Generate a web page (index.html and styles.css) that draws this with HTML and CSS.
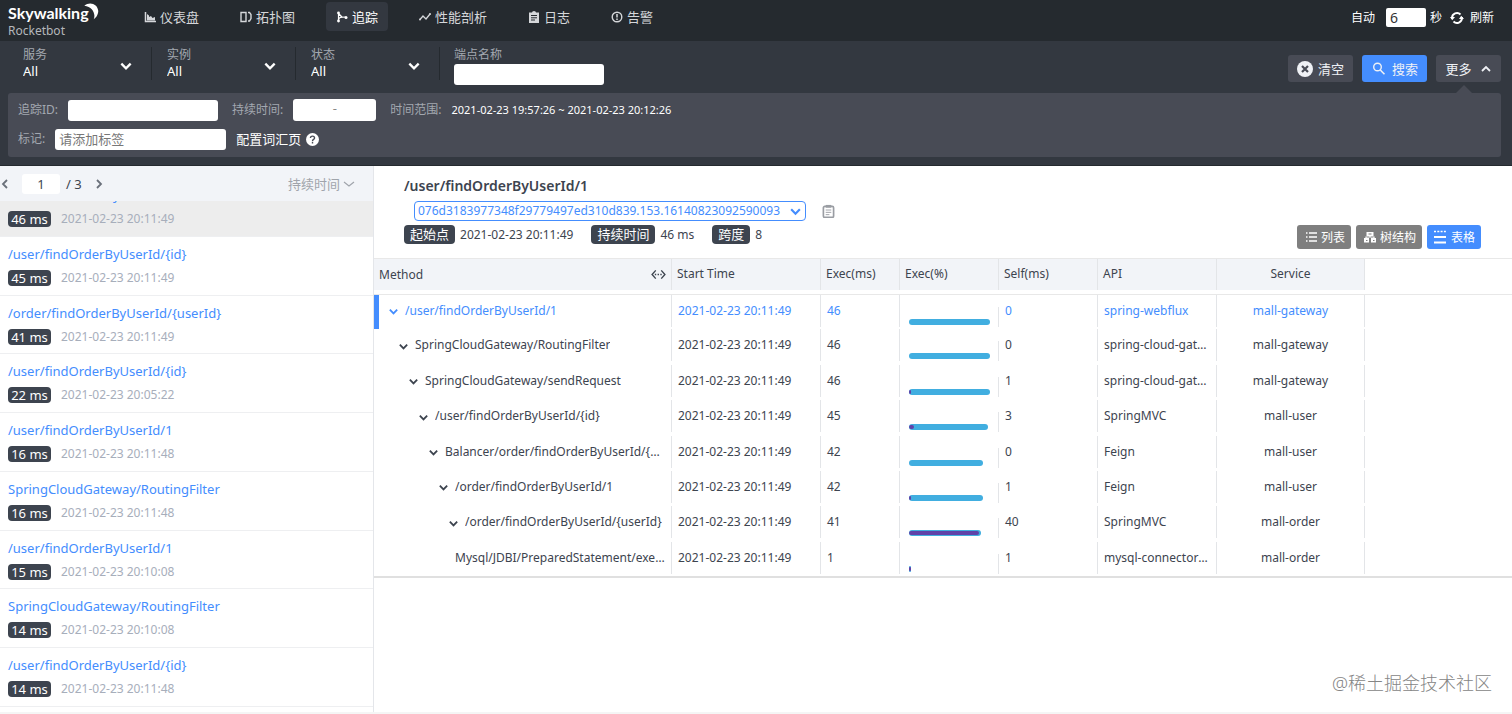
FILE: index.html
```html
<!DOCTYPE html>
<html lang="zh-CN">
<head>
    <meta charset="UTF-8">
    <meta name="viewport" content="width=device-width, initial-scale=1.0">
    <title>SkyWalking Rocketbot</title>
    <link rel="stylesheet" href="styles.css">
</head>
<body>
    <!-- Shared icons -->
    <svg class="sprite" width="0" height="0">
        <symbol id="down" viewBox="0 0 12 12"><path d="M2 4l4 4 4-4" fill="none" stroke="currentColor" stroke-width="2"/></symbol>
        <symbol id="thin-down" viewBox="0 0 12 12"><path d="M1 4l5 4 5-4" fill="none" stroke="currentColor" stroke-width="1.2"/></symbol>
    </svg>

    <header class="header">
        <a class="logo" href="#">
            <span class="logo-name">Skywalking</span>
            <svg class="logo-moon" viewBox="0 0 16 20"><path d="M0 3C6-2 15 1 15.500 9 15.500 13 13 16.500 10.500 18 13 12 9 4 0 3z" fill="#fff"/></svg>
            <span class="logo-sub">Rocketbot</span>
        </a>
        <nav class="nav">
            <a href="#"><svg class="icon" viewBox="0 0 12 12"><path d="M1.500 1v9.500H12" fill="none" stroke="currentColor" stroke-width="1.500"/><path d="M3 9.500V3l2 1.500V6l2-1 1.500 2L11 6v3.500z" fill="currentColor"/></svg>仪表盘</a>
            <a href="#"><svg class="icon" viewBox="0 0 12 12"><path d="M1 1.500h5v9H1zM8 1.500h1.500L11 3.500v4L9.500 10H8" fill="none" stroke="currentColor" stroke-width="1.400"/></svg>拓扑图</a>
            <a href="#" class="active"><svg class="icon" viewBox="0 0 12 12"><path d="M2.500 2v8.500M2.500 9c0-3 3-3 7-3M3 3l3 3" fill="none" stroke="currentColor" stroke-width="1.200"/><circle cx="2.500" cy="2" r="1.400" fill="currentColor"/><circle cx="2.500" cy="10" r="1.400" fill="currentColor"/><circle cx="10" cy="6.500" r="1.500" fill="currentColor"/></svg>追踪</a>
            <a href="#"><svg class="icon" viewBox="0 0 12 12"><path d="M1 8.500l3-3.500 3 3 4-5" fill="none" stroke="currentColor" stroke-width="1.300"/><circle cx="1" cy="8.500" r="1" fill="currentColor"/><circle cx="11" cy="3" r="1" fill="currentColor"/></svg>性能剖析</a>
            <a href="#"><svg class="icon" viewBox="0 0 12 12"><path d="M1 1.500h3a2 1.500 0 0 1 4 0h3V12H1z" fill="currentColor"/><path d="M3 4.500h6M3 6.800h6M3 9h4" stroke="#252a2f"/></svg>日志</a>
            <a href="#"><svg class="icon" viewBox="0 0 12 12"><circle cx="6" cy="6" r="4.800" fill="none" stroke="currentColor" stroke-width="1.400"/><path d="M6 3v3.500M6 7.500V9" stroke="currentColor" stroke-width="1.500"/></svg>告警</a>
        </nav>
        <div class="auto">
            <label for="seconds">自动</label>
            <input type="text" id="seconds" value="6">
            <span>秒</span>
            <button class="reload">
                <svg class="icon-reload" viewBox="0 0 14 14"><path d="M2 8V7a5 5 0 0 1 8.500-3.500M12 6v1a5 5 0 0 1-8.500 3.500" fill="none" stroke="currentColor" stroke-width="1.900"/><path d="M0 6h5L2.200 9.300zM9 8h5l-2.800-3.300z" fill="currentColor"/></svg>
                刷新
            </button>
        </div>
    </header>

    <!-- Search conditions -->
    <section class="search">
        <div class="search-top">
            <div class="picker">
                <label for="service">服务</label>
                <select id="service"><option>All</option></select>
                <svg class="picker-arrow"><use href="#down"/></svg>
            </div>
            <div class="picker">
                <label for="instance">实例</label>
                <select id="instance"><option>All</option></select>
                <svg class="picker-arrow"><use href="#down"/></svg>
            </div>
            <div class="picker">
                <label for="status">状态</label>
                <select id="status"><option>All</option></select>
                <svg class="picker-arrow"><use href="#down"/></svg>
            </div>
            <div class="endpoint">
                <label for="endpoint">端点名称</label>
                <input type="text" id="endpoint" class="field">
            </div>
            <div class="actions">
                <button class="btn"><svg class="icon-lg" viewBox="0 0 16 16"><circle cx="8" cy="8" r="8" fill="currentColor"/><path d="M5 5l6 6M11 5l-6 6" stroke="#484b55" stroke-width="2.200"/></svg>清空</button>
                <button class="btn btn-blue"><svg class="icon-lg" viewBox="0 0 16 16"><circle cx="6.500" cy="6" r="3.800" fill="none" stroke="currentColor" stroke-width="1.400"/><path d="M9.300 9l4.200 4.200" stroke="currentColor" stroke-width="1.600"/></svg>搜索</button>
                <button class="btn btn-more">更多<svg class="icon" viewBox="0 0 12 12"><path d="M2 8l4-4 4 4" fill="none" stroke="currentColor" stroke-width="1.800"/></svg></button>
            </div>
        </div>
        <div class="more">
            <div class="more-row">
                <label for="traceId">追踪ID:</label>
                <input type="text" id="traceId" class="field">
                <label for="minTime" class="gap-left">持续时间:</label>
                <span class="range"><input type="text" id="minTime"><span>-</span><input type="text" aria-label="max"></span>
                <span class="gap-left caption">时间范围:</span>
                <span class="range-text">2021-02-23 19:57:26 ~ 2021-02-23 20:12:26</span>
            </div>
            <div class="more-row">
                <label for="tags">标记:</label>
                <input type="text" id="tags" class="field field-tags" placeholder="请添加标签">
                <a class="vocab" href="#">配置词汇页
                    <svg class="icon-help" viewBox="0 0 14 14"><circle cx="7" cy="7" r="7" fill="currentColor"/><path d="M4.800 5.500c0-3 4.400-2.700 4.400-.2C9.200 7 7 6.800 7 8.800M7 9.800v1.600" fill="none" stroke="#484b55" stroke-width="1.500"/></svg>
                </a>
            </div>
        </div>
    </section>

    <main class="main">
        <!-- Trace list -->
        <aside class="side">
            <div class="side-head">
                <button class="page-btn" aria-label="prev"><svg viewBox="0 0 12 12"><path d="M7 2L3 6l4 4" fill="none" stroke="currentColor" stroke-width="1.800"/></svg></button>
                <input type="text" class="page-input" value="1" aria-label="page">
                <span class="page-total">/ 3</span>
                <button class="page-btn" aria-label="next"><svg viewBox="0 0 12 12"><path d="M4 2l4 4-4 4" fill="none" stroke="currentColor" stroke-width="1.800"/></svg></button>
                <div class="sort">
                    <select aria-label="sort"><option>持续时间</option></select>
                    <svg><use href="#thin-down"/></svg>
                </div>
            </div>
            <div class="side-body">
                <ul class="traces">
                    <li class="selected"><a href="#">/user/findOrderByUserId/1</a><div><b>46 ms</b><time>2021-02-23 20:11:49</time></div></li>
                    <li><a href="#">/user/findOrderByUserId/{id}</a><div><b>45 ms</b><time>2021-02-23 20:11:49</time></div></li>
                    <li><a href="#">/order/findOrderByUserId/{userId}</a><div><b>41 ms</b><time>2021-02-23 20:11:49</time></div></li>
                    <li><a href="#">/user/findOrderByUserId/{id}</a><div><b>22 ms</b><time>2021-02-23 20:05:22</time></div></li>
                    <li><a href="#">/user/findOrderByUserId/1</a><div><b>16 ms</b><time>2021-02-23 20:11:48</time></div></li>
                    <li><a href="#">SpringCloudGateway/RoutingFilter</a><div><b>16 ms</b><time>2021-02-23 20:11:48</time></div></li>
                    <li><a href="#">/user/findOrderByUserId/1</a><div><b>15 ms</b><time>2021-02-23 20:10:08</time></div></li>
                    <li><a href="#">SpringCloudGateway/RoutingFilter</a><div><b>14 ms</b><time>2021-02-23 20:10:08</time></div></li>
                    <li><a href="#">/user/findOrderByUserId/{id}</a><div><b>14 ms</b><time>2021-02-23 20:11:48</time></div></li>
                </ul>
            </div>
        </aside>

        <!-- Trace detail -->
        <section class="detail">
            <div class="detail-head">
                <h1>/user/findOrderByUserId/1</h1>
                <div class="trace-id">
                    <div class="trace-select">
                        <select aria-label="trace id"><option>076d3183977348f29779497ed310d839.153.16140823092590093</option></select>
                        <svg><use href="#down"/></svg>
                    </div>
                    <button class="copy" aria-label="copy"><svg viewBox="0 0 14 16"><rect x="1.500" y="2.500" width="11" height="12" rx="1.500" fill="none" stroke="currentColor" stroke-width="1.800"/><path d="M4 1h6v3H4z" fill="currentColor"/><path d="M4 6.500h6M4 9h6M4 11.500h4" stroke="currentColor"/></svg></button>
                </div>
                <div class="summary">
                    <b>起始点</b><span>2021-02-23 20:11:49</span>
                    <b>持续时间</b><span>46 ms</span>
                    <b>跨度</b><span>8</span>
                    <div class="views">
                        <button><svg class="icon" viewBox="0 0 12 12"><path d="M4 2h8M4 6h8M4 10h8M1 2h1.500M1 6h1.500M1 10h1.500" stroke="currentColor" stroke-width="1.300"/></svg>列表</button>
                        <button><svg class="icon" viewBox="0 0 12 12"><path d="M2.500 1h7v4h-7zM0 7h5v4.500H0zM7 7h5v4.500H7z" fill="currentColor"/><path d="M6 4v2M2 8V6h8v2" fill="none" stroke="currentColor" stroke-width="1.200"/><path d="M4.500 3h3M2 9.500h1.500M9 9.500h1.500" stroke="#7f7f7f" stroke-width="1.200"/></svg>树结构</button>
                        <button class="on"><svg class="icon-table" viewBox="0 0 14 14"><path d="M1 1.500h12" stroke="currentColor" stroke-width="1.600" stroke-dasharray="2 1.300"/><path d="M1 7h12M1 12.500h12" stroke="currentColor" stroke-width="1.800"/></svg>表格</button>
                    </div>
                </div>
            </div>

            <table class="spans">
                <colgroup>
                    <col class="c-method"><col class="c-time"><col class="c-exec"><col class="c-self"><col class="c-self"><col class="c-api"><col class="c-service"><col>
                </colgroup>
                <thead>
                    <tr>
                        <th><div class="method-head">Method<svg viewBox="0 0 16 12"><path d="M5 1.500L1 6l4 4.500M11 1.500L15 6l-4 4.500" fill="none" stroke="currentColor" stroke-width="1.500"/><path d="M4 6h8" stroke="currentColor" stroke-width="1.500" stroke-dasharray="1.500 1.500"/></svg></div></th>
                        <th><div>Start Time</div></th>
                        <th><div>Exec(ms)</div></th>
                        <th><div>Exec(%)</div></th>
                        <th><div>Self(ms)</div></th>
                        <th><div>API</div></th>
                        <th><div class="center">Service</div></th>
                        <th></th>
                    </tr>
                </thead>
                <tbody id="rows"></tbody>
            </table>
        </section>
        <div class="watermark">@稀土掘金技术社区</div>
    </main>

    <script>
        const total = 46;
        const spans = [
            ["/user/findOrderByUserId/1", 46, 0, "spring-webflux", "mall-gateway"],
            ["SpringCloudGateway/RoutingFilter", 46, 0, "spring-cloud-gateway", "mall-gateway"],
            ["SpringCloudGateway/sendRequest", 46, 1, "spring-cloud-gateway", "mall-gateway"],
            ["/user/findOrderByUserId/{id}", 45, 3, "SpringMVC", "mall-user"],
            ["Balancer/order/findOrderByUserId/{userId}", 42, 0, "Feign", "mall-user"],
            ["/order/findOrderByUserId/1", 42, 1, "Feign", "mall-user"],
            ["/order/findOrderByUserId/{userId}", 41, 40, "SpringMVC", "mall-order"],
            ["Mysql/JDBI/PreparedStatement/execute", 1, 1, "mysql-connector-java", "mall-order"]
        ];

        // One row per span, indented by its depth
        document.getElementById("rows").innerHTML = spans.map(([name, exec, self, api, service], depth) => `
            <tr class="${depth === 0 ? "current" : ""}">
                <td><div class="method" style="padding-left: ${11 + depth * 10}px">
                    ${depth < spans.length - 1 ? '<svg><use href="#down"/></svg>' : ''}
                    <span>${name}</span>
                </div></td>
                <td><div>2021-02-23 20:11:49</div></td>
                <td><div>${exec}</div></td>
                <td><div class="bar-cell"><div class="bar" style="width: ${exec / total * 100}%"><i style="width: ${self / exec * 100}%"></i></div></div></td>
                <td><div>${self}</div></td>
                <td><div>${api}</div></td>
                <td><div class="center">${service}</div></td>
                <td></td>
            </tr>`).join("");
    </script>
</body>
</html>
```
FILE: styles.css
```css
* {
    box-sizing: border-box;
}

body {
    margin: 0;
    min-height: 100vh;
    display: flex;
    flex-direction: column;
    background: #fff;
    color: #3d444f;
    font-family: "Noto Sans", "Noto Sans CJK SC", sans-serif;
    font-size: 13px;
    line-height: 18px;
}

input, select, button {
    font: inherit;
    color: inherit;
    margin: 0;
    padding: 0;
    border: 0;
    outline: 0;
    background: none;
}

select {
    appearance: none;
}

button {
    cursor: pointer;
}

a {
    text-decoration: none;
    color: inherit;
}

.sprite {
    position: absolute;
}

.icon {
    width: 12px;
    height: 12px;
}

/* Header */
.header {
    display: flex;
    align-items: flex-start;
    height: 41px;
    padding: 2px 18px 0 8px;
    background: #252a2f;
    color: #d5d7da;
}

.logo {
    position: relative;
    width: 126px;
    display: flex;
    flex-direction: column;
    color: #fff;
}

.logo-name {
    font-family: Lato, sans-serif;
    font-size: 16px;
    font-weight: 700;
    line-height: 22px;
}

.logo-moon {
    position: absolute;
    left: 76px;
    top: 1px;
    width: 15px;
    height: 18px;
}

.logo-sub {
    font-size: 12px;
    line-height: 14px;
    color: #b4b7bb;
}

.nav {
    display: flex;
    gap: 21px;
}

.nav a {
    display: flex;
    align-items: center;
    gap: 4px;
    height: 29px;
    padding: 0 10px;
    border-radius: 4px;
}

.nav .active {
    background: #333840;
    color: #fff;
}

.auto {
    display: flex;
    align-items: center;
    height: 31px;
    margin-left: auto;
    font-size: 12px;
    color: #fff;
}

.auto input {
    width: 40px;
    height: 19px;
    margin: 0 4px 0 11px;
    padding: 0 4px;
    border-radius: 2px;
    background: #fff;
    color: #333;
    font-size: 14px;
}

.reload {
    display: flex;
    align-items: center;
    gap: 6px;
    margin-left: 8px;
}

.icon-reload {
    width: 14px;
    height: 14px;
}

/* Search conditions */
.search {
    padding: 6px 11px 8px 8px;
    border-bottom: 1px solid #252a2f;
    background: #333840;
    color: #fff;
}

.search-top {
    display: flex;
    height: 46px;
}

.search label,
.caption {
    color: #a3a8b0;
    font-size: 12px;
    line-height: 16px;
}

.picker {
    position: relative;
    display: flex;
    flex-direction: column;
    width: 144px;
    height: 33px;
    padding-left: 15px;
    border-right: 1px solid #252a2f;
}

.picker select {
    width: 116px;
    line-height: 16px;
    text-align: left;
}

.picker-arrow {
    position: absolute;
    right: 18px;
    top: 12px;
    width: 14px;
    height: 14px;
    pointer-events: none;
}

.endpoint {
    display: flex;
    flex-direction: column;
    gap: 1px;
    padding-left: 14px;
}

.field {
    width: 150px;
    height: 21px;
    padding: 0 4px;
    border-radius: 3px;
    background: #fff;
    color: #333;
}

.field::placeholder {
    color: #777;
}

.actions {
    display: flex;
    gap: 9px;
    margin: 8px 0 0 auto;
}

.btn {
    display: flex;
    align-items: center;
    justify-content: center;
    gap: 5px;
    width: 65px;
    height: 27px;
    border-radius: 3px;
    background: #484b55;
    color: #eff1f5;
}

.btn-blue {
    background: #448dfe;
}

.icon-lg {
    width: 16px;
    height: 16px;
}

.btn-more {
    position: relative;
    gap: 8px;
}

.btn-more::after {
    content: "";
    position: absolute;
    left: 20px;
    top: 30px;
    border: 8px solid transparent;
    border-top: 0;
    border-bottom-color: #484b55;
}

.more {
    padding: 6px 10px 7px;
    border-radius: 3px;
    background: #484b55;
}

.more-row {
    display: flex;
    align-items: center;
    height: 22px;
    gap: 10px;
}

.more-row + .more-row {
    margin-top: 7px;
}

.gap-left {
    margin-left: 4px;
}

.range {
    display: flex;
    width: 83px;
    height: 22px;
    border-radius: 3px;
    background: #fff;
    color: #888;
    text-align: center;
}

.range input {
    flex: 1;
    min-width: 0;
}

.range-text {
    font-size: 11px;
}

.field-tags {
    width: 171px;
}

.vocab {
    display: flex;
    align-items: center;
    gap: 5px;
}

.icon-help {
    width: 13px;
    height: 13px;
}

/* Trace list */
.main {
    position: relative;
    flex: 1;
    display: flex;
    border-bottom: 2px solid #f5f5f5;
}

.side {
    display: flex;
    flex-direction: column;
    width: 374px;
    border-right: 1px solid #e4e6ea;
}

.side-head {
    display: flex;
    align-items: center;
    height: 35px;
    padding-right: 18px;
    background: #f2f4f8;
}

.page-btn {
    width: 12px;
    height: 12px;
    color: #6a707a;
}

.page-btn svg {
    display: block;
}

.page-input {
    width: 38px;
    height: 20px;
    margin: 0 6px 0 10px;
    border-radius: 3px;
    background: #fff;
    text-align: center;
}

.page-total {
    margin-right: 11px;
}

.sort {
    display: flex;
    align-items: center;
    gap: 2px;
    margin-left: auto;
    color: #a0a4ab;
}

.sort svg {
    width: 12px;
    height: 12px;
}

.side-body {
    flex: 1;
    display: flex;
    overflow: hidden;
}

/* the list is scrolled down by part of its first row */
.traces {
    flex: 1;
    display: flex;
    flex-direction: column;
    margin: -23px 0 0;
    padding: 0 0 5px;
    list-style: none;
}

.traces li {
    flex: 1;
    padding: 7px 8px 0;
    border-bottom: 1px solid #eeeff1;
}

.traces .selected {
    background: #ededed;
}

.traces a {
    display: block;
    color: #448dfe;
    line-height: 20px;
}

.traces div {
    display: flex;
    align-items: center;
    gap: 10px;
    margin-top: 6px;
}

.traces b {
    width: 43px;
    border-radius: 4px;
    background: #3d444f;
    color: #fff;
    font-weight: 400;
    line-height: 16px;
    text-align: center;
}

.traces time {
    color: #a7aebb;
    font-size: 12px;
    line-height: 16px;
}

/* Trace detail */
.detail {
    flex: 1;
    min-width: 0;
}

.detail-head {
    padding: 10px 31px 9px 30px;
    border-bottom: 1px solid #e8e8e8;
}

.detail-head h1 {
    margin: 0;
    font-size: 14px;
    font-weight: 600;
    line-height: 20px;
}

.trace-id {
    display: flex;
    align-items: center;
    gap: 16px;
    margin: 5px 0 4px 10px;
}

.trace-select {
    display: flex;
    align-items: center;
    height: 20px;
    padding: 0 3px;
    border: 1px solid #448dfe;
    border-radius: 4px;
    color: #448dfe;
    font-size: 12px;
}

.trace-select select {
    width: 371px;
}

.trace-select svg {
    width: 13px;
    height: 13px;
}

.copy {
    width: 13px;
    height: 15px;
    color: #9a9da3;
}

.copy svg {
    display: block;
}

.summary {
    display: flex;
    align-items: flex-start;
    height: 24px;
    font-size: 12px;
    line-height: 19px;
}

.summary b {
    margin-right: 5px;
    padding: 0 6px;
    border-radius: 4px;
    background: #3d444f;
    color: #fff;
    font-size: 13px;
    font-weight: 400;
}

.summary span {
    margin-right: 18px;
}

.views {
    display: flex;
    gap: 5px;
    margin-left: auto;
}

.views button {
    display: flex;
    align-items: center;
    gap: 4px;
    height: 24px;
    padding: 0 6px 0 8px;
    border-radius: 3px;
    background: #7f7f7f;
    color: #fff;
    font-size: 12px;
}

.views .on {
    padding-left: 6px;
    background: #448dfe;
}

.icon-table {
    width: 14px;
    height: 14px;
}

/* Span table */
.spans {
    width: 100%;
    height: 319px;
    table-layout: fixed;
    border-collapse: collapse;
    border-bottom: 2px solid #e0e0e0;
    font-size: 12px;
}

.c-method {
    width: 298px;
}

.c-time {
    width: 149px;
}

.c-exec {
    width: 79px;
}

.c-self {
    width: 99px;
}

.c-api {
    width: 119px;
}

.c-service {
    width: 148px;
}

.spans th,
.spans td {
    padding: 0;
    height: 35px;
    font-weight: 400;
    text-align: left;
    vertical-align: top;
}

.spans thead tr {
    border-bottom: 1px solid #e8e8e8;
}

.spans th > div,
.spans td > div {
    height: 31px;
    padding: 0 5px;
    border-right: 1px solid #e3e5e8;
    line-height: 30px;
    overflow: hidden;
    white-space: nowrap;
    text-overflow: ellipsis;
}

.spans th > div {
    background: #f2f4f8;
}

.spans td > div {
    height: 32px;
    padding: 0 6px;
    line-height: 32px;
}

.spans .center {
    text-align: center;
}

.spans .method-head {
    display: flex;
    align-items: center;
    justify-content: space-between;
}

.method-head svg {
    width: 15px;
    height: 11px;
}

.spans .method {
    display: flex;
    align-items: center;
}

.method svg {
    flex: none;
    width: 11px;
    height: 11px;
    margin: 2px 6px 0 3px;
}

.method span {
    overflow: hidden;
    text-overflow: ellipsis;
}

.current {
    color: #448dfe;
}

.current td:first-child {
    box-shadow: inset 5px 0 #448dfe;
}

.spans .bar-cell {
    display: flex;
    align-items: flex-end;
    height: 20px;
    margin-top: 12px;
    padding: 0 8px 2px 9px;
}

.bar {
    display: flex;
    align-items: center;
    height: 6px;
    border-radius: 3px;
    background: #41aee0;
    overflow: hidden;
}

.bar i {
    height: 4px;
    border-radius: 2px;
    background: #6042a8;
}

.watermark {
    position: absolute;
    right: 20px;
    bottom: 15px;
    color: #858585;
    font-size: 18px;
    font-weight: 300;
    line-height: 28px;
}
```
